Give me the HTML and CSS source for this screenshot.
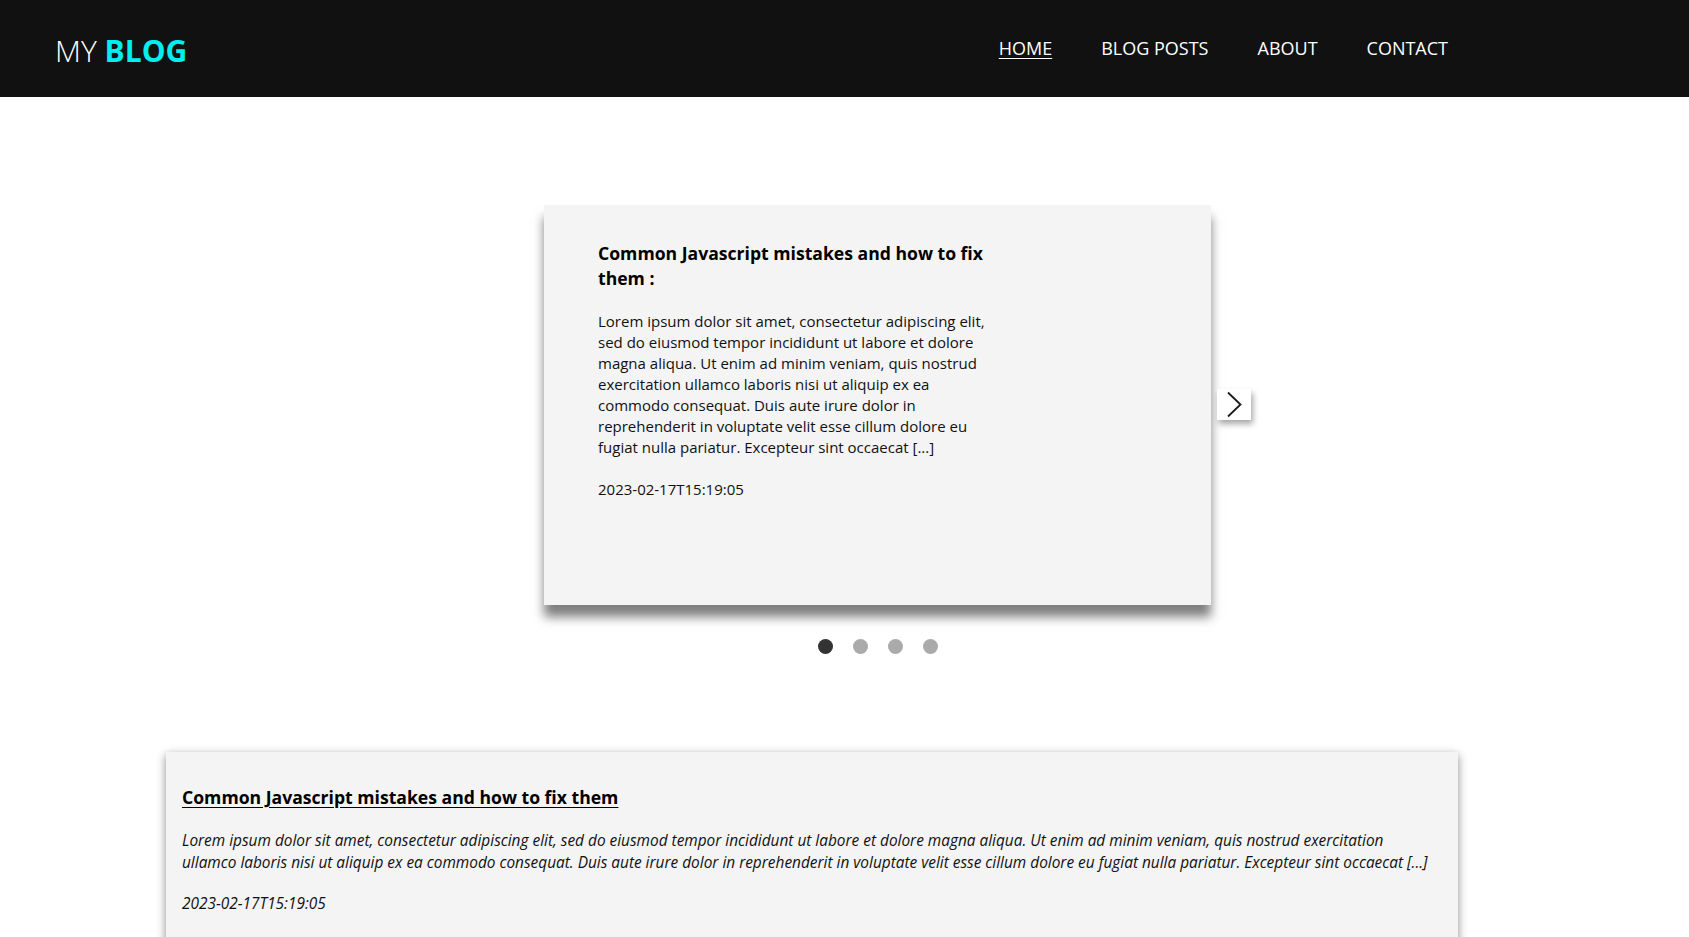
FILE: index.html
```html
<!DOCTYPE html>
<html lang="en">
<head>
<meta charset="utf-8">
<title>My Blog</title>
<link rel="stylesheet" href="styles.css">
</head>
<body>
<header class="site-header">
  <div class="logo"><span class="logo-my">MY</span> <span class="logo-blog">BLOG</span></div>
  <nav class="nav">
    <a class="nav-link active" href="#">HOME</a>
    <a class="nav-link" href="#">BLOG POSTS</a>
    <a class="nav-link" href="#">ABOUT</a>
    <a class="nav-link" href="#">CONTACT</a>
  </nav>
</header>
<main>
  <section class="carousel">
    <div class="carousel-row">
      <article class="slide">
        <div class="slide-text">
          <h3 class="slide-title">Common Javascript mistakes and how to fix them :</h3>
          <p class="slide-body">Lorem ipsum dolor sit amet, consectetur adipiscing elit, sed do eiusmod tempor incididunt ut labore et dolore magna aliqua. Ut enim ad minim veniam, quis nostrud exercitation ullamco laboris nisi ut aliquip ex ea commodo consequat. Duis aute irure dolor in reprehenderit in voluptate velit esse cillum dolore eu fugiat nulla pariatur. Excepteur sint occaecat [...]</p>
          <p class="slide-date">2023-02-17T15:19:05</p>
        </div>
      </article>
      <button class="next-btn" aria-label="Next">
        <svg width="34" height="31" viewBox="0 0 34 31"><polyline points="11,3.5 23.5,15.5 11,27.5" fill="none" stroke="#1a1a1a" stroke-width="1.8"/></svg>
      </button>
    </div>
    <div class="dots">
      <span class="dot active"></span>
      <span class="dot"></span>
      <span class="dot"></span>
      <span class="dot"></span>
    </div>
  </section>
  <section class="posts">
    <article class="post-card">
      <h3 class="post-title"><a href="#">Common Javascript mistakes and how to fix them</a></h3>
      <p class="post-body">Lorem ipsum dolor sit amet, consectetur adipiscing elit, sed do eiusmod tempor incididunt ut labore et dolore magna aliqua. Ut enim ad minim veniam, quis nostrud exercitation ullamco laboris nisi ut aliquip ex ea commodo consequat. Duis aute irure dolor in reprehenderit in voluptate velit esse cillum dolore eu fugiat nulla pariatur. Excepteur sint occaecat [...]</p>
      <p class="post-date">2023-02-17T15:19:05</p>
    </article>
  </section>
</main>
</body>
</html>
```

FILE: styles.css
```css
* { box-sizing: border-box; }

body {
  margin: 0;
  font-family: "Open Sans", "Noto Sans", sans-serif;
  color: #111;
  background: #fff;
}

.site-header {
  height: 97px;
  background: #111;
  display: flex;
  align-items: center;
  padding: 0 241px 0 55px;
}

.logo {
  font-size: 30px;
  color: #fff;
  padding-top: 4px;
}
.logo-my { font-weight: 300; }
.logo-blog { font-weight: 700; color: #00eeee; }

.nav {
  margin-left: auto;
  display: flex;
  gap: 49px;
  padding-bottom: 1px;
}
.nav-link {
  color: #fff;
  text-decoration: none;
  font-size: 18px;
}
.nav-link.active { text-decoration: underline; text-underline-offset: 3px; }

.carousel {
  padding-top: 108px;
}
.carousel-row {
  display: flex;
  align-items: center;
  gap: 6px;
  padding-left: 544px;
}
.slide {
  width: 667px;
  height: 400px;
  background: #f4f4f4;
  box-shadow: 0 12px 10px rgba(0, 0, 0, 0.5);
  padding: 36px 54px;
}
.slide-text { width: 402px; }
.slide-title {
  margin: 0 0 20px;
  font-size: 17.6px;
  line-height: 25px;
  font-weight: 700;
  color: #000;
}
.slide-body {
  margin: 0 0 21px;
  font-size: 15px;
  line-height: 21px;
  color: #111;
}
.slide-date {
  margin: 0;
  font-size: 15px;
  line-height: 21px;
}

.next-btn {
  width: 34px;
  height: 31px;
  padding: 0;
  border: none;
  background: #fff;
  box-shadow: 2px 4px 6px rgba(0, 0, 0, 0.35);
  display: flex;
  align-items: center;
  justify-content: center;
  margin-top: -2px;
}

.dots {
  display: flex;
  justify-content: center;
  gap: 20px;
  width: 667px;
  margin: 34px 0 0 544px;
}
.dot {
  width: 15px;
  height: 15px;
  border-radius: 50%;
  background: #aaa;
}
.dot.active { background: #333; }

.posts {
  padding: 98px 0 0 166px;
}
.post-card {
  width: 1292px;
  background: #f4f4f4;
  box-shadow: 0 3px 9px rgba(0, 0, 0, 0.45);
  padding: 33px 24px 30px 16px;
}
.post-title {
  margin: 0 0 20px;
  font-size: 17.6px;
  line-height: 25px;
  font-weight: 700;
}
.post-title a { color: #000; text-decoration: underline; text-underline-offset: 3px; }
.post-body {
  margin: 0 0 20px;
  font-style: italic;
  font-size: 15.4px;
  line-height: 21.5px;
  color: #111;
}
.post-date {
  margin: 0;
  font-style: italic;
  font-size: 15.4px;
  line-height: 21px;
}
```
